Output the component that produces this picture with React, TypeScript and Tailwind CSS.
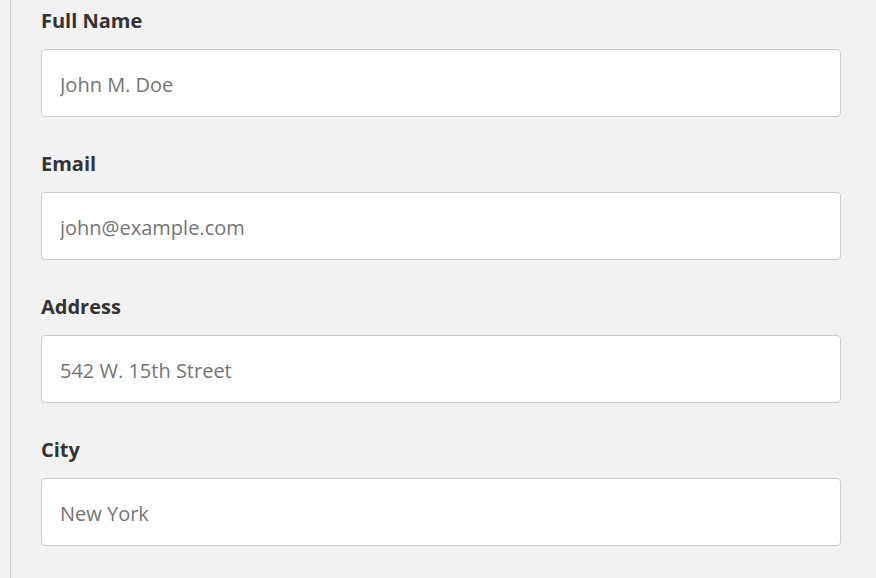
import React from 'react';

const fields = [
  { id: 'fname', label: 'Full Name', placeholder: 'John M. Doe' },
  { id: 'email', label: 'Email', placeholder: 'john@example.com' },
  { id: 'adr', label: 'Address', placeholder: '542 W. 15th Street' },
  { id: 'city', label: 'City', placeholder: 'New York' },
];

export default function App() {
  return (
    <div className="min-h-screen w-full bg-[#f2f2f2] font-['Open_Sans',sans-serif]">
      <div className="ml-[10px] min-h-[578px] border-l border-[#cccccc] pl-[30px] pr-[35px] pt-[5px]">
        {fields.map(f => (
          <div key={f.id} className="mb-[31px]">
            <label htmlFor={f.id} className="block h-[32px] leading-[32px] mb-[12px] text-[20px] font-bold text-[#333333]">
              {f.label}
            </label>
            <input
              id={f.id}
              type="text"
              placeholder={f.placeholder}
              className="block w-[800px] h-[68px] px-[18px] pt-[2px] rounded-[4px] border border-[#cccccc] bg-white text-[20px] text-[#333333] placeholder:text-[#757575] outline-none"
            />
          </div>
        ))}
      </div>
    </div>
  );
}
